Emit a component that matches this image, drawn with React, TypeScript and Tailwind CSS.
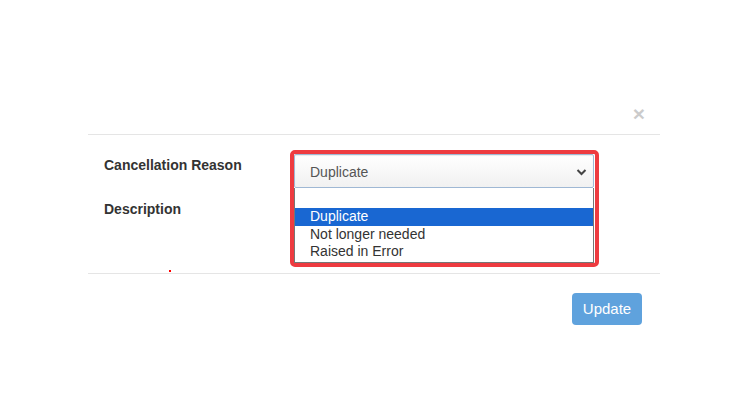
import React from "react";

const options = ["Duplicate", "Not longer needed", "Raised in Error"];

const App = () => {
  return (
    <div className="w-[750px] h-[412px] bg-white font-['Liberation_Sans',Arial,sans-serif] text-[14px] text-[#333]">
      <div className="ml-[88px] w-[572px] pt-[94px]">
        {/* header */}
        <div className="h-[41px] border-b border-[#e5e5e5] flex justify-end items-center pr-[15px]">
          <span className="text-[21px] font-bold leading-none text-black opacity-20 -mt-[1px]">×</span>
        </div>

        {/* body */}
        <div className="relative h-[139px] border-b border-[#e5e5e5] flex pt-[15px] pl-[16px]">
          <div className="w-[186px] flex flex-col pt-[5px] font-bold">
            <div className="leading-[20px] h-[20px]">Cancellation Reason</div>
            <div className="leading-[20px] h-[20px] mt-[24px]">Description</div>
          </div>
          <div className="w-[309px] h-[117px] border-[4px] border-[#ee3b40] rounded-[5px] flex flex-col pr-[1px]">
            <div className="h-[34px] shrink-0 border border-[#9fb8d4] rounded-[2px] bg-gradient-to-b from-white to-[#f1f1f1] flex items-center justify-between pl-[15px] pr-[6px] pt-[2px] text-[#555] shadow-[inset_0_1px_1px_rgba(0,0,0,0.08)]">
              <span>Duplicate</span>
              <svg width="11" height="8" viewBox="0 0 11 8">
                <path d="M1.5 2 L5.5 6 L9.5 2" fill="none" stroke="#444" strokeWidth="2" />
              </svg>
            </div>
            <div className="flex-1 bg-white border-x border-b border-[#767676] flex flex-col leading-[17.5px] text-[#333]">
              <div className="h-[20px] shrink-0" />
              {options.map((o, i) => (
                <div
                  key={o}
                  className={
                    i === 0
                      ? "h-[17.5px] pl-[15px] bg-[#1967d2] text-white"
                      : "h-[17.5px] pl-[15px]"
                  }
                >
                  {o}
                </div>
              ))}
            </div>
          </div>
          <div className="absolute left-[81px] bottom-[1px] w-[2px] h-[2px] bg-[#ff0000]" />
        </div>

        {/* footer */}
        <div className="flex justify-end pt-[19px] pr-[18px]">
          <button className="w-[70px] h-[32px] rounded-[4px] bg-[#5fa2dd] text-white text-[15px]">
            Update
          </button>
        </div>
      </div>
    </div>
  );
};

export default App;
